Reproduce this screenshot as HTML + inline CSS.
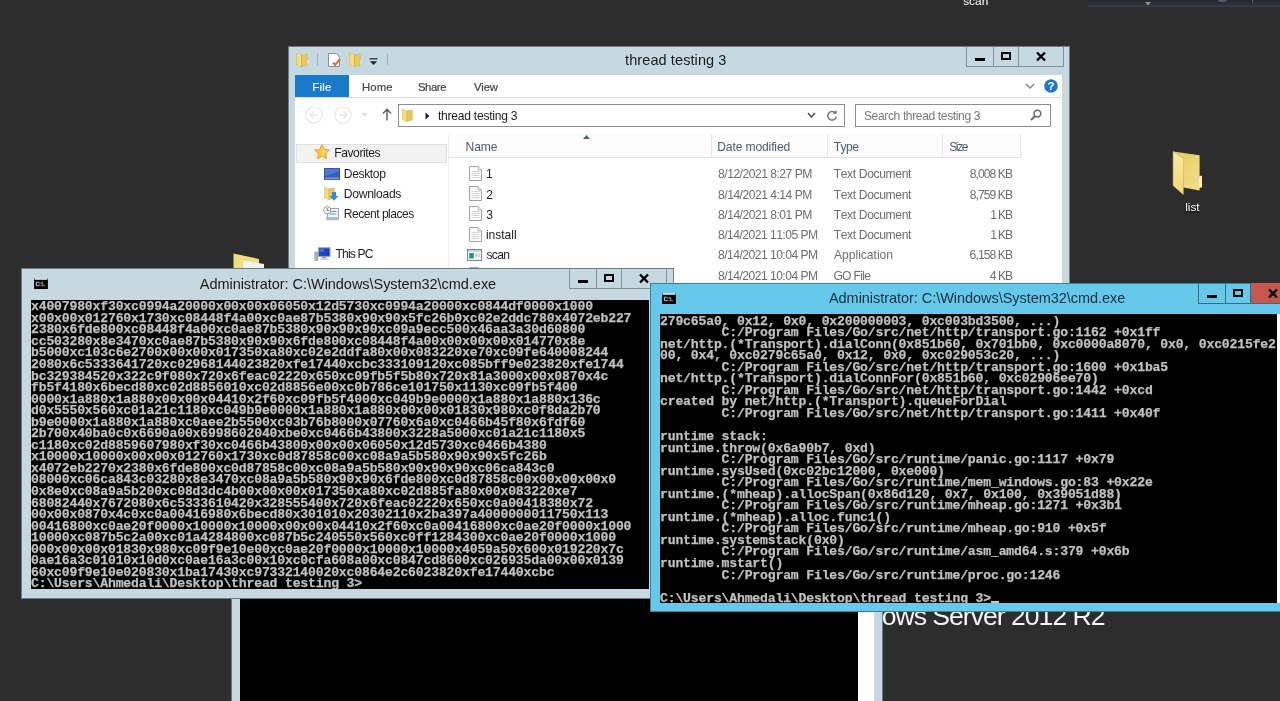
<!DOCTYPE html><html><head><meta charset="utf-8"><title>thread testing 3</title><style>
*{box-sizing:border-box;margin:0;padding:0}
html,body{width:1280px;height:701px;overflow:hidden;background:#2d2d2d}
body{position:relative;font-family:"Liberation Sans",sans-serif;font-size:12px;color:#1e1e1e;font-kerning:none}
#root{position:absolute;left:0;top:0;width:1280px;height:701px;will-change:transform;filter:blur(0.3px)}
.abs{position:absolute}
svg{position:absolute;overflow:visible}
.t{position:absolute;white-space:pre;line-height:1}
.win{position:absolute;background:#c7d9e0;border:1px solid #6c7d85}
.win.active{background:#66c8ea;border-color:#3b7f99}
.cap{position:absolute;top:-1px;height:20.6px;border:1px solid #7e9098;border-top:none;display:flex}
.cap div{height:100%;border-right:1px solid #7e9098;position:relative}
.cap div:last-child{border-right:none}
.active .cap{border-color:#2f6f88}
.active .cap div{border-color:#2f6f88}
.con{position:absolute;background:#000;color:#c0c0c0;font-family:"Liberation Mono",monospace;font-weight:bold;font-size:13.1px;line-height:11.55px;white-space:pre;overflow:hidden;letter-spacing:-0.161px;padding-top:1.25px;-webkit-text-stroke:0.25px #c0c0c0}
.con div{height:11.55px}
</style></head><body><div id="root">
<div class="abs" style="left:1088px;top:-6px;width:200px;height:12.5px;background:linear-gradient(#25262e 48%,#30323c 84%,#3e414d)"></div>
<svg style="left:1145px;top:1.5px" width="6" height="4" viewBox="0 0 6 4"><path d="M0 0 H6 L3 3.6 Z" fill="#8e93a3"/></svg>
<div class="abs" style="left:1218px;top:-3px;width:9px;height:5px;border-radius:3px;background:#55596a"></div>
<div class="abs" style="left:1252px;top:-1px;width:1px;height:4px;background:#55596a"></div>
<div class="t" style="left:963.17px;top:-3.99px;font-size:11.8px;letter-spacing:0.057px;color:#fff;">scan</div>
<svg style="left:1172px;top:150px" width="32" height="46" viewBox="0 0 32 46"><defs><linearGradient id="fb" x1="0" y1="0" x2="1" y2="1"><stop offset="0" stop-color="#e8c95c"/><stop offset="1" stop-color="#f3e08c"/></linearGradient><linearGradient id="ff" x1="0" y1="0" x2="0" y2="1"><stop offset="0" stop-color="#f9e9a4"/><stop offset="1" stop-color="#f0d878"/></linearGradient></defs><path d="M1.2 1.6 L27.6 5.2 L27.6 40.4 L11.4 37.6 L11.4 8.2 Z" fill="url(#fb)"/><path d="M27 26.4 L30 25.6 L30 37.2 L27 38 Z" fill="#f7eec6"/><path d="M1.2 1.6 L11.6 8.4 L11.2 44.4 L1.2 35.6 Z" fill="url(#ff)" stroke="#ecd276" stroke-width="0.6"/></svg>
<div class="t" style="left:1185.20px;top:201.71px;font-size:11.8px;letter-spacing:-0.013px;color:#fff;text-shadow:0 1px 2px #000;">list</div>
<div class="t" style="left:881.68px;top:602.98px;font-size:26.6px;letter-spacing:-1.003px;color:#f4f4f4;">ows Server 2012 R2</div>
<svg style="left:233px;top:253.4px" width="34" height="16" viewBox="0 0 34 16"><path d="M0.5 0.5 L26 6 L26 16 L0.5 16 Z" fill="#f1dc84"/><path d="M10 7.5 L31 11 L31 16 L10 16 Z" fill="#f2f2f2"/></svg>
<div class="win" style="left:230.7px;top:560px;width:652.8px;height:200px"><div class="abs" style="left:8.5px;top:0;width:619px;height:200px;background:#000"></div><div class="abs" style="left:626.3px;top:0;width:16.3px;height:200px;background:#fff"></div></div>
<div class="win" style="left:288px;top:46px;width:781.5px;height:300px"></div>
<div class="cap" style="left:966px;top:46px;width:98px"><div style="width:27px"><span class="abs" style="left:8px;top:12px;width:10px;height:3px;background:#000"></span></div><div style="width:25px"><span class="abs" style="left:7px;top:6px;width:10px;height:8px;border:2px solid #000"></span></div><div style="width:44px;"><svg style="left:17px;top:6px" width="10" height="9" viewBox="0 0 10 9"><path d="M1 0.5 L9 8.5 M9 0.5 L1 8.5" stroke="#000" stroke-width="2.4"/></svg></div></div>
<svg style="left:296px;top:52px" width="13" height="15" viewBox="0 0 13 15"><path d="M0.5 1.2 L5.5 3 L5.5 14.6 L0.5 12.6 Z" fill="#f3dc82" stroke="#d9b84e" stroke-width="0.6"/><path d="M5.5 3 L11.2 2.2 L11.2 13 L5.5 14.6 Z" fill="#e9c95f" stroke="#d1ac3e" stroke-width="0.6"/><path d="M11.2 8.6 L12.6 8.2 L12.6 11.6 L11.2 12 Z" fill="#f7ecc0"/></svg>
<div class="abs" style="left:317px;top:54px;width:1px;height:11px;background:#9fb0b8"></div>
<svg style="left:328px;top:53px" width="13" height="14" viewBox="0 0 13 14"><path d="M0.5 0.5 H8 L11.5 4 V13.5 H0.5 Z" fill="#fff" stroke="#8a8f94"/><path d="M5 9.5 L7.2 12 L11.8 6.2" fill="none" stroke="#e3623a" stroke-width="2"/></svg>
<svg style="left:349px;top:52px" width="13" height="15" viewBox="0 0 13 15"><path d="M0.5 1.2 L5.5 3 L5.5 14.6 L0.5 12.6 Z" fill="#f3dc82" stroke="#d9b84e" stroke-width="0.6"/><path d="M5.5 3 L11.2 2.2 L11.2 13 L5.5 14.6 Z" fill="#e9c95f" stroke="#d1ac3e" stroke-width="0.6"/><path d="M11.2 8.6 L12.6 8.2 L12.6 11.6 L11.2 12 Z" fill="#f7ecc0"/></svg>
<svg style="left:369px;top:58px" width="9" height="8" viewBox="0 0 9 8"><path d="M0.5 0.8 H8.5" stroke="#222" stroke-width="1.2"/><path d="M0.8 3.2 H8.2 L4.5 7 Z" fill="#222"/></svg>
<div class="abs" style="left:387px;top:54px;width:1px;height:11px;background:#9fb0b8"></div>
<div class="t" style="left:625.08px;top:53.43px;font-size:14.5px;letter-spacing:0.093px;color:#1a1a1a;">thread testing 3</div>
<div class="abs" style="left:295.4px;top:75px;width:766.6px;height:250px;background:#fff"></div>
<div class="abs" style="left:295.4px;top:75px;width:53.6px;height:22px;background:#1979ca"></div>
<div class="t" style="left:312.27px;top:81.63px;font-size:11.3px;letter-spacing:0.274px;color:#fff;-webkit-text-stroke:0.2px;">File</div>
<div class="t" style="left:362.07px;top:81.63px;font-size:11.3px;letter-spacing:0.096px;color:#444;-webkit-text-stroke:0.2px;">Home</div>
<div class="t" style="left:417.99px;top:81.63px;font-size:11.3px;letter-spacing:-0.410px;color:#444;-webkit-text-stroke:0.2px;">Share</div>
<div class="t" style="left:473.95px;top:81.63px;font-size:11.3px;letter-spacing:-0.157px;color:#444;-webkit-text-stroke:0.2px;">View</div>
<div class="abs" style="left:295px;top:97px;width:767px;height:1px;background:#dadbdc"></div>
<svg style="left:1025px;top:83px" width="10" height="7" viewBox="0 0 10 7"><path d="M1 1 L5 5 L9 1" fill="none" stroke="#8a8a8a" stroke-width="1.5"/></svg>
<svg style="left:1044px;top:79px" width="14" height="14" viewBox="0 0 14 14"><circle cx="7" cy="7" r="6.8" fill="#1a78c8"/><text x="7" y="11.2" text-anchor="middle" font-family="Liberation Sans, sans-serif" font-weight="bold" font-size="11.5" fill="#fff">?</text></svg>
<svg style="left:305px;top:106px" width="18" height="18" viewBox="0 0 18 18"><circle cx="9" cy="9" r="8.2" fill="none" stroke="#e9e9e9" stroke-width="1.3"/><path d="M13 9 H5.4 M8.6 5.6 L5.2 9 L8.6 12.4" fill="none" stroke="#e9e9e9" stroke-width="1.4"/></svg>
<svg style="left:333.6px;top:106px" width="18" height="18" viewBox="0 0 18 18"><circle cx="9" cy="9" r="8.2" fill="none" stroke="#e9e9e9" stroke-width="1.3"/><path d="M5 9 H12.6 M9.4 5.6 L12.8 9 L9.4 12.4" fill="none" stroke="#e9e9e9" stroke-width="1.4"/></svg>
<svg style="left:361px;top:113px" width="7" height="4" viewBox="0 0 7 4"><path d="M0 0 H7 L3.5 3.5 Z" fill="#dedede"/></svg>
<svg style="left:382px;top:108px" width="10" height="13" viewBox="0 0 10 13"><path d="M5 12.5 V1.5 M1 5.5 L5 1.2 L9 5.5" fill="none" stroke="#5a5a5a" stroke-width="1.4"/></svg>
<div class="abs" style="left:398px;top:104px;width:447px;height:23px;border:1px solid #8d8d8d;background:#fff"></div>
<svg style="left:402px;top:108px" width="12" height="14" viewBox="0 0 13 15"><path d="M0.5 1.2 L5.5 3 L5.5 14.6 L0.5 12.6 Z" fill="#f3dc82" stroke="#d9b84e" stroke-width="0.6"/><path d="M5.5 3 L11.2 2.2 L11.2 13 L5.5 14.6 Z" fill="#e9c95f" stroke="#d1ac3e" stroke-width="0.6"/><path d="M11.2 8.6 L12.6 8.2 L12.6 11.6 L11.2 12 Z" fill="#f7ecc0"/></svg>
<svg style="left:425px;top:112px" width="5" height="8" viewBox="0 0 5 8"><path d="M0.5 0.5 L4.5 4 L0.5 7.5 Z" fill="#222"/></svg>
<div class="t" style="left:438.02px;top:109.86px;font-size:12.1px;letter-spacing:-0.260px;color:#1e1e1e;">thread testing 3</div>
<svg style="left:807px;top:112px" width="9" height="7" viewBox="0 0 9 7"><path d="M1 1 L4.5 5 L8 1" fill="none" stroke="#555" stroke-width="1.6"/></svg>
<svg style="left:826px;top:109px" width="12" height="13" viewBox="0 0 12 13"><path d="M9.6 4.2 A4.3 4.3 0 1 0 10.3 7.6" fill="none" stroke="#777" stroke-width="1.5"/><path d="M6.8 4.8 L10.6 4.8 L10.6 1 Z" fill="#777"/></svg>
<div class="abs" style="left:855px;top:104px;width:196px;height:23px;border:1px solid #8d8d8d;background:#fff"></div>
<div class="t" style="left:863.95px;top:109.86px;font-size:12.1px;letter-spacing:-0.388px;color:#7a7a7a;">Search thread testing 3</div>
<svg style="left:1030px;top:109px" width="12" height="12" viewBox="0 0 12 12"><circle cx="7.4" cy="4.6" r="3.4" fill="none" stroke="#666" stroke-width="1.5"/><path d="M5 7 L1 11" stroke="#666" stroke-width="1.8"/></svg>
<div class="abs" style="left:296px;top:143.6px;width:151px;height:19px;background:#f2f2f2;border:1px solid #e1e1e1"></div>
<svg style="left:314px;top:144px" width="16" height="15" viewBox="0 0 16 15"><path d="M8 0.6 L10.2 5.4 L15.4 6 L11.5 9.5 L12.6 14.6 L8 12 L3.4 14.6 L4.5 9.5 L0.6 6 L5.8 5.4 Z" fill="#fbc73a" stroke="#e89a1c" stroke-width="0.9"/><path d="M8 3.5 L9.3 6.6 L12.4 7 L10 9 L10.6 12 L8 10.5 Z" fill="#fde28e"/></svg>
<div class="t" style="left:334.21px;top:146.86px;font-size:12.1px;letter-spacing:-0.416px;color:#1e1e1e;">Favorites</div>
<svg style="left:324px;top:168px" width="16" height="12" viewBox="0 0 16 12"><rect x="0.5" y="0.5" width="15" height="11" fill="#4a7ad8" stroke="#3a559c"/><path d="M1 8 L15 3 L15 11 L1 11 Z" fill="#3560c0"/><rect x="1" y="9.6" width="14" height="1.6" fill="#8c9ac0"/></svg>
<div class="t" style="left:343.81px;top:167.66px;font-size:12.1px;letter-spacing:-0.381px;color:#1e1e1e;">Desktop</div>
<svg style="left:324px;top:186px" width="12" height="14" viewBox="0 0 13 15"><path d="M0.5 1.2 L5.5 3 L5.5 14.6 L0.5 12.6 Z" fill="#f3dc82" stroke="#d9b84e" stroke-width="0.6"/><path d="M5.5 3 L11.2 2.2 L11.2 13 L5.5 14.6 Z" fill="#e9c95f" stroke="#d1ac3e" stroke-width="0.6"/><path d="M11.2 8.6 L12.6 8.2 L12.6 11.6 L11.2 12 Z" fill="#f7ecc0"/></svg>
<svg style="left:329px;top:192px" width="10" height="9" viewBox="0 0 10 9"><path d="M3 0 H7 V4 H9.6 L5 8.8 L0.4 4 H3 Z" fill="#2d8fe0"/></svg>
<div class="t" style="left:343.81px;top:187.86px;font-size:12.1px;letter-spacing:-0.279px;color:#1e1e1e;">Downloads</div>
<svg style="left:323px;top:206px" width="17" height="15" viewBox="0 0 17 15"><rect x="4.5" y="2.5" width="11" height="10" fill="#f4f6f8" stroke="#9aa3ab"/><path d="M6.5 5.5 H13.5 M6.5 8 H13.5" stroke="#5b9bd8" stroke-width="1.2"/><rect x="3" y="11" width="13" height="3.2" fill="#b6bcc2"/><circle cx="4.2" cy="4.2" r="3.6" fill="#f7f7f7" stroke="#8c949b" stroke-width="0.9"/><path d="M4.2 2 V4.4 H6" fill="none" stroke="#666" stroke-width="0.9"/></svg>
<div class="t" style="left:343.81px;top:208.16px;font-size:12.1px;letter-spacing:-0.512px;color:#1e1e1e;">Recent places</div>
<svg style="left:314px;top:247px" width="17" height="15" viewBox="0 0 17 15"><rect x="4.5" y="0.8" width="11.5" height="8.6" fill="#1d3fc0" stroke="#9aa3ab" stroke-width="1"/><path d="M5.2 1.4 H10 V5.2 H5.2 Z" fill="#3e6fe6"/><rect x="8" y="9.8" width="4.4" height="1.6" fill="#8e969d"/><rect x="6" y="11.4" width="8.4" height="1.4" fill="#c3c8cc"/><rect x="0.8" y="5" width="3" height="8.6" fill="#b0b6bb" stroke="#8a9096" stroke-width="0.6"/></svg>
<div class="t" style="left:335.53px;top:248.16px;font-size:12.1px;letter-spacing:-0.849px;color:#1e1e1e;">This PC</div>
<div class="abs" style="left:448px;top:134px;width:1px;height:150px;background:#f0f0f0"></div>
<div class="abs" style="left:449px;top:134px;width:572px;height:24px;background:#fcfcfc;border-bottom:1px solid #e4e4e4"></div>
<div class="abs" style="left:711px;top:134px;width:1px;height:23px;background:#e6e6e6"></div>
<div class="abs" style="left:827px;top:134px;width:1px;height:23px;background:#e6e6e6"></div>
<div class="abs" style="left:942px;top:134px;width:1px;height:23px;background:#e6e6e6"></div>
<div class="abs" style="left:1020px;top:134px;width:1px;height:23px;background:#e6e6e6"></div>
<svg style="left:583px;top:135px" width="7" height="4" viewBox="0 0 7 4"><path d="M0 4 L3.5 0 L7 4 Z" fill="#4c607a"/></svg>
<div class="t" style="left:465.61px;top:140.66px;font-size:12.1px;letter-spacing:-0.115px;color:#4b5c74;">Name</div>
<div class="t" style="left:717.21px;top:140.66px;font-size:12.1px;letter-spacing:-0.132px;color:#4b5c74;">Date modified</div>
<div class="t" style="left:833.73px;top:140.66px;font-size:12.1px;letter-spacing:-0.530px;color:#4b5c74;">Type</div>
<div class="t" style="left:949.15px;top:140.66px;font-size:12.1px;letter-spacing:-1.384px;color:#4b5c74;">Size</div>
<svg style="left:468.5px;top:165.9px" width="13" height="15" viewBox="0 0 13 15"><path d="M0.5 0.5 H9 L12.5 4 V14.5 H0.5 Z" fill="#fbfbfb" stroke="#9ea3a7" stroke-width="1"/><path d="M9 0.5 V4 H12.5" fill="#e8ebee" stroke="#a5aaae" stroke-width="0.8"/><path d="M2.5 5.5 H10.5 M2.5 7.5 H10.5 M2.5 9.5 H10.5 M2.5 11.5 H10.5" stroke="#cfd3d6" stroke-width="0.9"/></svg>
<div class="t" style="left:485.88px;top:168.36px;font-size:12.1px;letter-spacing:0.000px;color:#1e1e1e;">1</div>
<div class="t" style="left:718.07px;top:168.36px;font-size:12.1px;letter-spacing:-0.496px;color:#6d6d6d;">8/12/2021 8:27 PM</div>
<div class="t" style="left:833.73px;top:168.36px;font-size:12.1px;letter-spacing:-0.357px;color:#6d6d6d;">Text Document</div>
<div class="t" style="left:969.67px;top:168.36px;font-size:12.1px;letter-spacing:-0.903px;color:#6d6d6d;">8,008 KB</div>
<svg style="left:468.5px;top:186.18px" width="13" height="15" viewBox="0 0 13 15"><path d="M0.5 0.5 H9 L12.5 4 V14.5 H0.5 Z" fill="#fbfbfb" stroke="#9ea3a7" stroke-width="1"/><path d="M9 0.5 V4 H12.5" fill="#e8ebee" stroke="#a5aaae" stroke-width="0.8"/><path d="M2.5 5.5 H10.5 M2.5 7.5 H10.5 M2.5 9.5 H10.5 M2.5 11.5 H10.5" stroke="#cfd3d6" stroke-width="0.9"/></svg>
<div class="t" style="left:486.19px;top:188.64px;font-size:12.1px;letter-spacing:0.000px;color:#1e1e1e;">2</div>
<div class="t" style="left:718.07px;top:188.64px;font-size:12.1px;letter-spacing:-0.496px;color:#6d6d6d;">8/14/2021 4:14 PM</div>
<div class="t" style="left:833.73px;top:188.64px;font-size:12.1px;letter-spacing:-0.357px;color:#6d6d6d;">Text Document</div>
<div class="t" style="left:969.67px;top:188.64px;font-size:12.1px;letter-spacing:-0.903px;color:#6d6d6d;">8,759 KB</div>
<svg style="left:468.5px;top:206.46px" width="13" height="15" viewBox="0 0 13 15"><path d="M0.5 0.5 H9 L12.5 4 V14.5 H0.5 Z" fill="#fbfbfb" stroke="#9ea3a7" stroke-width="1"/><path d="M9 0.5 V4 H12.5" fill="#e8ebee" stroke="#a5aaae" stroke-width="0.8"/><path d="M2.5 5.5 H10.5 M2.5 7.5 H10.5 M2.5 9.5 H10.5 M2.5 11.5 H10.5" stroke="#cfd3d6" stroke-width="0.9"/></svg>
<div class="t" style="left:486.34px;top:208.92px;font-size:12.1px;letter-spacing:0.000px;color:#1e1e1e;">3</div>
<div class="t" style="left:718.07px;top:208.92px;font-size:12.1px;letter-spacing:-0.496px;color:#6d6d6d;">8/14/2021 8:01 PM</div>
<div class="t" style="left:833.73px;top:208.92px;font-size:12.1px;letter-spacing:-0.357px;color:#6d6d6d;">Text Document</div>
<div class="t" style="left:990.18px;top:208.92px;font-size:12.1px;letter-spacing:-1.091px;color:#6d6d6d;">1 KB</div>
<svg style="left:468.5px;top:226.74px" width="13" height="15" viewBox="0 0 13 15"><path d="M0.5 0.5 H9 L12.5 4 V14.5 H0.5 Z" fill="#fbfbfb" stroke="#9ea3a7" stroke-width="1"/><path d="M9 0.5 V4 H12.5" fill="#e8ebee" stroke="#a5aaae" stroke-width="0.8"/><path d="M2.5 5.5 H10.5 M2.5 7.5 H10.5 M2.5 9.5 H10.5 M2.5 11.5 H10.5" stroke="#cfd3d6" stroke-width="0.9"/></svg>
<div class="t" style="left:485.99px;top:229.20px;font-size:12.1px;letter-spacing:-0.053px;color:#1e1e1e;">install</div>
<div class="t" style="left:718.07px;top:229.20px;font-size:12.1px;letter-spacing:-0.527px;color:#6d6d6d;">8/14/2021 11:05 PM</div>
<div class="t" style="left:833.73px;top:229.20px;font-size:12.1px;letter-spacing:-0.357px;color:#6d6d6d;">Text Document</div>
<div class="t" style="left:990.18px;top:229.20px;font-size:12.1px;letter-spacing:-1.091px;color:#6d6d6d;">1 KB</div>
<svg style="left:467px;top:248.82000000000002px" width="15" height="12" viewBox="0 0 15 12"><rect x="0.5" y="0.5" width="14" height="11" fill="#f4f6f7" stroke="#7d848a" stroke-width="1"/><rect x="1" y="1" width="13" height="1.8" fill="#c9d3da"/><rect x="2.2" y="4" width="4.6" height="5.5" fill="#2f8f83"/><rect x="8.2" y="4.5" width="2.2" height="3.6" fill="#b9c7c4"/><rect x="11.4" y="4.5" width="1.6" height="3.6" fill="#ccd6d4"/></svg>
<div class="t" style="left:486.46px;top:249.48px;font-size:12.1px;letter-spacing:-0.679px;color:#1e1e1e;">scan</div>
<div class="t" style="left:718.07px;top:249.48px;font-size:12.1px;letter-spacing:-0.527px;color:#6d6d6d;">8/14/2021 10:04 PM</div>
<div class="t" style="left:833.98px;top:249.48px;font-size:12.1px;letter-spacing:-0.008px;color:#6d6d6d;">Application</div>
<div class="t" style="left:969.59px;top:249.48px;font-size:12.1px;letter-spacing:-0.890px;color:#6d6d6d;">6,158 KB</div>
<svg style="left:468.5px;top:267.3px" width="13" height="15" viewBox="0 0 13 15"><path d="M0.5 0.5 H9 L12.5 4 V14.5 H0.5 Z" fill="#fbfbfb" stroke="#9ea3a7" stroke-width="1"/><path d="M9 0.5 V4 H12.5" fill="#e8ebee" stroke="#a5aaae" stroke-width="0.8"/><path d="M2.5 5.5 H10.5 M2.5 7.5 H10.5 M2.5 9.5 H10.5 M2.5 11.5 H10.5" stroke="#cfd3d6" stroke-width="0.9"/></svg>
<div class="t" style="left:718.07px;top:269.76px;font-size:12.1px;letter-spacing:-0.527px;color:#6d6d6d;">8/14/2021 10:04 PM</div>
<div class="t" style="left:833.39px;top:269.76px;font-size:12.1px;letter-spacing:-0.673px;color:#6d6d6d;">GO File</div>
<div class="t" style="left:989.72px;top:269.76px;font-size:12.1px;letter-spacing:-0.939px;color:#6d6d6d;">4 KB</div>
<div class="win" style="left:21.4px;top:268px;width:652.6px;height:331px">
<div class="cap" style="left:546.6px;top:-1px;width:98px"><div style="width:27px"><span class="abs" style="left:8px;top:12px;width:10px;height:3px;background:#000"></span></div><div style="width:25px"><span class="abs" style="left:7px;top:6px;width:10px;height:8px;border:2px solid #000"></span></div><div style="width:44px;"><svg style="left:17px;top:6px" width="10" height="9" viewBox="0 0 10 9"><path d="M1 0.5 L9 8.5 M9 0.5 L1 8.5" stroke="#000" stroke-width="2.4"/></svg></div></div>
<svg style="left:11.2px;top:9px" width="14" height="11" viewBox="0 0 15 12"><rect x="0" y="0" width="15" height="12" fill="#000"/><rect x="0.5" y="0" width="14" height="2" fill="#d9d9d9"/><text x="1.5" y="9.5" font-family="Liberation Sans, sans-serif" font-size="6.5" font-weight="bold" fill="#fff">C:\.</text></svg>
<div class="con" style="left:8.6px;top:31px;width:618px;height:288.7px"><div>x4007980xf30xc0994a20000x00x00x06050x12d5730xc0994a20000xc0844df0000x1000</div><div>x00x00x012760x1730xc08448f4a00xc0ae87b5380x90x90x5fc26b0xc02e2ddc780x4072eb227</div><div>2380x6fde800xc08448f4a00xc0ae87b5380x90x90x90xc09a9ecc500x46aa3a30d60800</div><div>cc503280x8e3470xc0ae87b5380x90x90x6fde800xc08448f4a00x00x00x00x014770x8e</div><div>b5000xc103c6e2700x00x00x017350xa80xc02e2ddfa80x00x083220xe70xc09fe640008244</div><div>2080x6c5333641720xc02968144023820xfe17440xcbc333109120xc085bff9e023820xfe1744</div><div>bc329384520x322c9f080x720x6feac02220x650xc09fb5f5b80x720x81a3000x00x0870x4c</div><div>fb5f4180x6becd80xc02d8856010xc02d8856e00xc0b786ce101750x1130xc09fb5f400</div><div>0000x1a880x1a880x00x00x04410x2f60xc09fb5f4000xc049b9e0000x1a880x1a880x136c</div><div>d0x5550x560xc01a21c1180xc049b9e0000x1a880x1a880x00x00x01830x980xc0f8da2b70</div><div>b9e0000x1a880x1a880xc0aee2b5500xc03b76b8000x07760x6a0xc0466b45f80x6fdf60</div><div>2b700x40ba0c0x6690a00x6998602040xbe0xc0466b43800x3228a5000xc01a21c1180x5</div><div>c1180xc02d8859607980xf30xc0466b43800x00x00x06050x12d5730xc0466b4380</div><div>x10000x10000x00x00x012760x1730xc0d87858c00xc08a9a5b580x90x90x5fc26b</div><div>x4072eb2270x2380x6fde800xc0d87858c00xc08a9a5b580x90x90x90xc06ca843c0</div><div>08000xc06ca843c03280x8e3470xc08a9a5b580x90x90x6fde800xc0d87858c00x00x00x00x0</div><div>0x8e0xc08a9a5b200xc08d3dc4b00x00x00x017350xa80xc02d885fa80x00x083220xe7</div><div>68082440x7672080x6c5333610420x328555400x720x6feac02220x650xc0a00418380x72</div><div>00x00x0870x4c0xc0a00416980x6becd80x301010x20302110x2ba397a4000000011750x113</div><div>00416800xc0ae20f0000x10000x10000x00x00x04410x2f60xc0a00416800xc0ae20f0000x1000</div><div>10000xc087b5c2a00xc01a4284800xc087b5c240550x560xc0ff1284300xc0ae20f0000x1000</div><div>000x00x00x01830x980xc09f9e10e00xc0ae20f0000x10000x10000x4059a50x600x019220x7c</div><div>0ae16a3c01010x10d0xc0ae16a3c00x10xc0cfa608a00xc0847cd8600xc026935da00x00x0139</div><div>60xc09f9e10e020830x1ba17430xc97332140020xc0864e2c6023820xfe17440xcbc</div><div>C:\Users\Ahmedali\Desktop\thread testing 3&gt;</div></div>
</div>
<div class="t" style="left:199.77px;top:277.13px;font-size:14.5px;letter-spacing:-0.043px;color:#1a1a1a;">Administrator: C:\Windows\System32\cmd.exe</div>
<div class="win active" style="left:650px;top:283px;width:640px;height:329.3px">
<div class="cap" style="left:547px;top:-1px;width:98px"><div style="width:27px"><span class="abs" style="left:8px;top:12px;width:10px;height:3px;background:#000"></span></div><div style="width:25px"><span class="abs" style="left:7px;top:6px;width:10px;height:8px;border:2px solid #000"></span></div><div style="width:44px;background:#c75850;"><svg style="left:17px;top:6px" width="10" height="9" viewBox="0 0 10 9"><path d="M1 0.5 L9 8.5 M9 0.5 L1 8.5" stroke="#000" stroke-width="2.4"/></svg></div></div>
<svg style="left:11px;top:9.2px" width="14" height="11" viewBox="0 0 15 12"><rect x="0" y="0" width="15" height="12" fill="#000"/><rect x="0.5" y="0" width="14" height="2" fill="#d9d9d9"/><text x="1.5" y="9.5" font-family="Liberation Sans, sans-serif" font-size="6.5" font-weight="bold" fill="#fff">C:\.</text></svg>
<div class="con" style="left:9px;top:30.3px;width:617px;height:289.2px"><div>279c65a0, 0x12, 0x0, 0x200000003, 0xc003bd3500, ...)</div><div>        C:/Program Files/Go/src/net/http/transport.go:1162 +0x1ff</div><div>net/http.(*Transport).dialConn(0x851b60, 0x701bb0, 0xc0000a8070, 0x0, 0xc0215fe2</div><div>00, 0x4, 0xc0279c65a0, 0x12, 0x0, 0xc029053c20, ...)</div><div>        C:/Program Files/Go/src/net/http/transport.go:1600 +0x1ba5</div><div>net/http.(*Transport).dialConnFor(0x851b60, 0xc02906ee70)</div><div>        C:/Program Files/Go/src/net/http/transport.go:1442 +0xcd</div><div>created by net/http.(*Transport).queueForDial</div><div>        C:/Program Files/Go/src/net/http/transport.go:1411 +0x40f</div><div></div><div>runtime stack:</div><div>runtime.throw(0x6a90b7, 0xd)</div><div>        C:/Program Files/Go/src/runtime/panic.go:1117 +0x79</div><div>runtime.sysUsed(0xc02bc12000, 0xe000)</div><div>        C:/Program Files/Go/src/runtime/mem_windows.go:83 +0x22e</div><div>runtime.(*mheap).allocSpan(0x86d120, 0x7, 0x100, 0x39051d88)</div><div>        C:/Program Files/Go/src/runtime/mheap.go:1271 +0x3b1</div><div>runtime.(*mheap).alloc.func1()</div><div>        C:/Program Files/Go/src/runtime/mheap.go:910 +0x5f</div><div>runtime.systemstack(0x0)</div><div>        C:/Program Files/Go/src/runtime/asm_amd64.s:379 +0x6b</div><div>runtime.mstart()</div><div>        C:/Program Files/Go/src/runtime/proc.go:1246</div><div></div><div>C:\Users\Ahmedali\Desktop\thread testing 3&gt;<span style="display:inline-block;width:7.7px;height:2px;background:#c8c8c8;vertical-align:-1px"></span></div></div>
<div class="abs" style="left:626px;top:30.3px;width:16px;height:289.2px;background:#fff"></div>
</div>
<div class="t" style="left:828.97px;top:291.23px;font-size:14.5px;letter-spacing:-0.043px;color:#12303e;">Administrator: C:\Windows\System32\cmd.exe</div>
</div></body></html>
